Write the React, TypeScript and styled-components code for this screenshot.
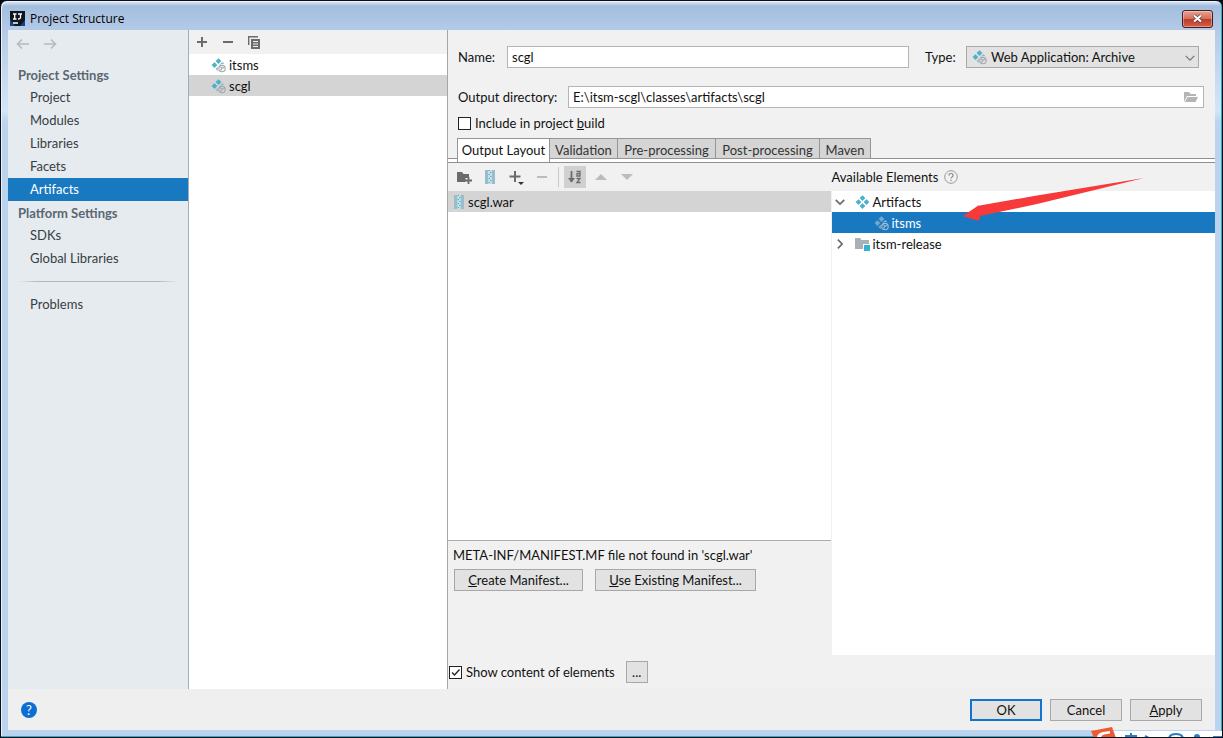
import React from "react";
import styled, { createGlobalStyle, css } from "styled-components";

const FONT = 'Lato, "Noto Sans CJK SC", sans-serif';
const TITLE_FONT = '"Open Sans", "Noto Sans CJK SC", sans-serif';

const GlobalStyle = createGlobalStyle`
  * { box-sizing: border-box; }
  body { margin: 0; background: #05070d; font: 13px/20px ${FONT}; color: #111; }
  button, input, select { font: inherit; color: inherit; margin: 0; }
  button { cursor: default; }
  h1, h2, p, ul { margin: 0; padding: 0; font: inherit; }
  ul { list-style: none; }
  svg { display: block; flex: none; }
`;

const Window = styled.div`
  position: relative;
  display: flex;
  flex-direction: column;
  min-height: 100vh;
  overflow: hidden;
  padding: 0 7px 7px;
  border: 1px solid #0b0f1a;
  border-radius: 7px 7px 0 0;
  background: linear-gradient(to bottom, #e4eefa 0, #a3bedd 5px, #b4cbe8 30px, #d4e5f6 110px, #bad4ef 121px, #bad4ef 100%);
  box-shadow: inset -1px -1px 0 #35a9c4, inset 1px 1px 0 #eaf3fc;
`;

const TitleBar = styled.header`
  display: flex;
  align-items: center;
  height: 29px;
  padding: 6px 2px 0;
  gap: 5px;
`;

const Title = styled.h1`
  flex: 1;
  font-family: ${TITLE_FONT};
  font-size: 12px;
  color: #000;
`;

const CloseButton = styled.button`
  display: flex;
  align-items: center;
  justify-content: center;
  width: 31px;
  height: 18px;
  padding: 0;
  border: 1px solid #4a1a20;
  border-radius: 3px;
  background: linear-gradient(#e3a394 0, #d3705c 48%, #bb3826 50%, #d2604a 100%);
  box-shadow: inset 0 0 0 1px rgba(255, 255, 255, 0.35);
`;

const Client = styled.div`
  flex: 1;
  display: flex;
  flex-direction: column;
  background: #f0efef;
`;

const Body = styled.main`
  flex: 1;
  display: grid;
  grid-template-columns: 181px 259px minmax(0, 1fr);
`;

const Sidebar = styled.nav`
  background: #e6ebef;
  border-right: 1px solid #a2adb8;
`;

const History = styled.div`
  display: flex;
  align-items: center;
  gap: 11px;
  height: 33px;
  padding: 0 7px 6px;
`;

const IconButton = styled.button<{ $on?: boolean }>`
  display: flex;
  align-items: center;
  justify-content: center;
  height: 22px;
  width: ${(p) => (p.$on ? "22px" : "16px")};
  margin: ${(p) => (p.$on ? "0 -3px" : "0")};
  padding: 0;
  border: 0;
  background: ${(p) => (p.$on ? "#d0d0d0" : "none")};
`;

const GroupTitle = styled.h2`
  height: 23px;
  line-height: 25px;
  padding-left: 10px;
  font-weight: 700;
  color: #5a6771;
`;

const NavLink = styled.a<{ $active?: boolean }>`
  display: block;
  height: 23px;
  line-height: 23px;
  padding-left: 22px;
  text-decoration: none;
  color: ${(p) => (p.$active ? "#fff" : "#363d43")};
  background: ${(p) => (p.$active ? "#1979c0" : "none")};
`;

const Divider = styled.hr`
  height: 1px;
  margin: 11px 10px;
  border: 0;
  background: linear-gradient(to right, #e6ebef, #b3babf 12%, #b3babf 88%, #e6ebef);
`;

const ListColumn = styled.section`
  background: #fff;
  border-right: 1px solid #a6a6a6;
`;

const ListToolbar = styled.div`
  display: flex;
  align-items: center;
  gap: 10px;
  height: 24px;
  padding-left: 5px;
  background: #f1f1f1;
`;

const Row = styled.li<{ $tone?: "grey" | "blue"; $indent: number }>`
  display: flex;
  align-items: center;
  gap: 3px;
  height: 21px;
  padding-left: ${(p) => p.$indent}px;
  ${(p) => p.$tone === "grey" && css`background: #d4d4d4;`}
  ${(p) => p.$tone === "blue" && css`background: #1979c0; color: #fff;`}
`;

const Twisty = styled.span`
  width: 17px;
`;

const Details = styled.section`
  display: flex;
  flex-direction: column;
  background: #f1f1f1;
`;

const Form = styled.div`
  display: flex;
  flex-direction: column;
  padding: 16px 11px 5px 10px;
`;

const Field = styled.div`
  display: flex;
  align-items: center;
  height: 22px;
  gap: 11px;
  margin-bottom: 18px;

  & + & { margin-bottom: 5px; }
`;

const FieldLabel = styled.label<{ $width: number }>`
  flex: none;
  width: ${(p) => p.$width}px;
  white-space: nowrap;
`;

const TextInput = styled.input`
  flex: 1;
  min-width: 0;
  height: 22px;
  padding: 0 4px;
  border: 1px solid #b4b4b4;
  background: #fff;
`;

const TypeField = styled.div`
  display: flex;
  align-items: center;
  gap: 11px;
  padding: 0 5px;
`;

const SelectBox = styled.div`
  position: relative;
  width: 233px;

  & > svg { position: absolute; top: 3px; left: 6px; pointer-events: none; }
  & > svg:last-child { top: 7px; left: auto; right: 4px; }
`;

const Select = styled.select`
  display: block;
  width: 100%;
  height: 22px;
  padding: 0 24px;
  appearance: none;
  border: 1px solid #a9a9a9;
  border-radius: 0;
  background: #e2e2e2;
`;

const PathBox = styled.div`
  display: flex;
  align-items: center;
  flex: 1;
  height: 22px;
  padding-right: 4px;
  border: 1px solid #b4b4b4;
  background: #fff;

  & > input { border: 0; height: 20px; }
`;

const CheckLabel = styled.label`
  display: flex;
  align-items: center;
  gap: 4px;
  height: 20px;
`;

const CheckBox = styled.input`
  appearance: none;
  width: 13px;
  height: 13px;
  border: 1px solid #222;
  background: #fff;

  &:checked {
    background: #fff url("data:image/svg+xml,%3Csvg xmlns='http://www.w3.org/2000/svg' viewBox='0 0 11 11'%3E%3Cpath d='M2 5.5l2.5 2.5L9.5 2.5' fill='none' stroke='%23222' stroke-width='1.3'/%3E%3C/svg%3E");
  }
`;

const Tabs = styled.div`
  display: flex;
  height: 25px;
  padding-left: 9px;
  background: linear-gradient(#f1f1f1 20px, #8f8f8f 20px, #8f8f8f 21px, #fff 21px, #fff 24px, #8f8f8f 24px);
`;

const Tab = styled.button<{ $active?: boolean; $width: number }>`
  display: flex;
  justify-content: center;
  width: ${(p) => p.$width}px;
  height: ${(p) => (p.$active ? "24px" : "21px")};
  line-height: 20px;
  padding: 1px 0 0;
  white-space: nowrap;
  border: solid #959595;
  border-width: 1px 1px ${(p) => (p.$active ? "0" : "1px")} 0;
  background: ${(p) => (p.$active ? "#fff" : "#d5d5d5")};
  color: ${(p) => (p.$active ? "#111" : "#333")};

  &:first-child { border-left-width: 1px; }
`;

const Panes = styled.div`
  flex: 1;
  display: grid;
  grid-template-columns: minmax(0, 1fr) minmax(0, 1fr);
`;

const Pane = styled.div`
  display: flex;
  flex-direction: column;
  min-height: 400px;
`;

const PaneToolbar = styled.div`
  display: flex;
  align-items: center;
  gap: 10px;
  height: 28px;
  padding-left: 8px;
`;

const PaneTitle = styled.div`
  display: flex;
  align-items: center;
  gap: 6px;
  height: 28px;
`;

const Separator = styled.span`
  width: 1px;
  height: 20px;
  margin: 0 -2px;
  background: #c8c8c8;
`;

const Tree = styled.ul`
  flex: 1;
  background: #fff;
`;

const LayoutTree = styled(Tree)`
  margin-right: 1px;
  border-bottom: 1px solid #adadad;
`;

const Manifest = styled.div`
  height: 114px;
  padding: 4px 5px;
`;

const ButtonRow = styled.div`
  display: flex;
  gap: 12px;
  padding: 4px 1px;
`;

const Button = styled.button<{ $primary?: boolean; $width: number }>`
  height: 22px;
  width: ${(p) => p.$width}px;
  padding: 0;
  border: ${(p) => (p.$primary ? "2px solid #0e76d0" : "1px solid #a8a8a8")};
  background: #e2e2e2;
  line-height: ${(p) => (p.$primary ? "16px" : "18px")};
`;

const Options = styled.div`
  display: flex;
  align-items: center;
  gap: 11px;
  height: 34px;
  padding-left: 1px;
`;

const Footer = styled.footer`
  display: flex;
  align-items: center;
  gap: 8px;
  height: 41px;
  padding: 0 13px;
`;

const HelpButton = styled.button`
  width: 16px;
  height: 16px;
  padding: 0;
  margin-right: auto;
  border: 0;
  border-radius: 50%;
  background: #0a6fd0;
  color: #fff;
  line-height: 16px;
`;

const Pointer = styled.svg`
  position: absolute;
  top: 176px;
  right: 76px;
  pointer-events: none;
`;

const Tray = styled.svg`
  position: absolute;
  right: -1px;
  bottom: -1px;
`;

const AppLogo = () => (
  <svg width="15" height="15" viewBox="0 0 15 15">
    <rect width="15" height="15" fill="#10161f" />
    <path d="M0 15V8l5 7zM15 15h-5l5-6z" fill="#15457b" />
    <path d="M3 3h3.500M4.700 3v5M3 8h3.500M8 3h4M10.500 3v3.500q0 1.500-2.500 1.500M3 12h5" stroke="#fff" strokeWidth="1.300" fill="none" />
  </svg>
);

const Diamonds = ({ archive = false, pale = false }: { archive?: boolean; pale?: boolean }) => {
  const main = pale ? "#6fa9cf" : "#4fb0cb";
  const soft = pale ? "#8db4d0" : "#93b9c6";
  return (
    <svg width="15" height="16" viewBox="0 0 15 16">
      <path d="M7.500 1.200l2.900 2.900-2.900 2.900-2.900-2.900z" fill={main} />
      <path d="M3.500 5.200l2.900 2.900L3.500 11 .6 8.100z" fill={main} />
      {!archive && <path d="M11.500 5.200l2.900 2.900-2.900 2.900-2.900-2.900zM7.500 9.200l2.900 2.900L7.500 15l-2.900-2.900z" fill={main} />}
      {archive && (
        <>
          <path d="M11.300 5l2.300 2.300q-3.300-.7-5 1l-.4-.4zM7.300 9.200q-1.200 2-.4 4.800L4.500 11.900z" fill={soft} />
          <g fill="none" stroke={pale ? "#a5bccd" : "#a2a9ae"} strokeWidth="1.100">
            <circle cx="11" cy="11.600" r="3.200" />
            <path d="M9 9.600l2 1.500 2.400-.6M9.500 13.600l1.500-2.500" />
          </g>
        </>
      )}
    </svg>
  );
};

const Archive = () => (
  <svg width="12" height="16" viewBox="0 0 12 16">
    <path d="M1 1h3.500v14H1zM7.500 1H11v14H7.500z" fill="#9bbccb" />
    <path d="M4.500 1h3v14h-3z" fill="#c3e3ea" />
    <path d="M4.500 1.500H6M6 3.500h1.500M4.500 5.500H6M6 7.500h1.500M4.500 9.500H6M6 11.500h1.500M4.500 13.500H6" stroke="#5fb0c2" />
  </svg>
);

const Stroke = ({ d, color = "#6b6b6b", size = 14, weight = 2 }: { d: string; color?: string; size?: number; weight?: number }) => (
  <svg width={size} height={size} viewBox="0 0 14 14">
    <path d={d} fill="none" stroke={color} strokeWidth={weight} />
  </svg>
);

export default function App() {
  return (
    <>
      <GlobalStyle />
      <Window>
        <TitleBar>
          <AppLogo />
          <Title>Project Structure</Title>
          <CloseButton aria-label="Close">
            <svg width="11" height="9" viewBox="0 0 11 9">
              <path d="M2 1.500l7 6M9 1.500l-7 6" stroke="#5a3238" strokeWidth="3.600" />
              <path d="M2 1.500l7 6M9 1.500l-7 6" stroke="#fff" strokeWidth="2.200" />
            </svg>
          </CloseButton>
        </TitleBar>
        <Client>
          <Body>
            <Sidebar>
              <History>
                <IconButton aria-label="Back"><Stroke color="#b5bbc0" weight={1.6} d="M13 7H1.500M6 2.500L1.500 7 6 11.500" /></IconButton>
                <IconButton aria-label="Forward"><Stroke color="#b5bbc0" weight={1.6} d="M1 7h11.500M8 2.500L12.500 7 8 11.500" /></IconButton>
              </History>
              <GroupTitle>Project Settings</GroupTitle>
              <NavLink href="#project">Project</NavLink>
              <NavLink href="#modules">Modules</NavLink>
              <NavLink href="#libraries">Libraries</NavLink>
              <NavLink href="#facets">Facets</NavLink>
              <NavLink href="#artifacts" $active>Artifacts</NavLink>
              <GroupTitle>Platform Settings</GroupTitle>
              <NavLink href="#sdks">SDKs</NavLink>
              <NavLink href="#global">Global Libraries</NavLink>
              <Divider />
              <NavLink href="#problems">Problems</NavLink>
            </Sidebar>
            <ListColumn>
              <ListToolbar>
                <IconButton aria-label="Add"><Stroke d="M7 2v10M2 7h10" /></IconButton>
                <IconButton aria-label="Remove"><Stroke d="M2 7h10" /></IconButton>
                <IconButton aria-label="Copy">
                  <svg width="14" height="14" viewBox="0 0 14 14">
                    <path d="M1.700 10V1.700H11" fill="none" stroke="#6b6b6b" strokeWidth="1.400" />
                    <path d="M4 4h9v10H4z" fill="#6b6b6b" />
                    <path d="M6 6.500h5M6 9h5M6 11.500h5" stroke="#f1f1f1" />
                  </svg>
                </IconButton>
              </ListToolbar>
              <ul>
                <Row $indent={22}><Diamonds archive />itsms</Row>
                <Row $indent={22} $tone="grey"><Diamonds archive />scgl</Row>
              </ul>
            </ListColumn>
            <Details>
              <Form>
                <Field>
                  <FieldLabel htmlFor="name" $width={38}>Name:</FieldLabel>
                  <TextInput id="name" defaultValue="scgl" />
                  <TypeField>
                    <FieldLabel htmlFor="type" $width={30}>Type:</FieldLabel>
                    <SelectBox>
                      <Diamonds archive />
                      <Select id="type"><option>Web Application: Archive</option></Select>
                      <Stroke size={10} color="#777" weight={1.8} d="M1 4l6 6 6-6" />
                    </SelectBox>
                  </TypeField>
                </Field>
                <Field>
                  <FieldLabel htmlFor="output" $width={99}>Output directory:</FieldLabel>
                  <PathBox>
                    <TextInput id="output" defaultValue="E:\itsm-scgl\classes\artifacts\scgl" />
                    <IconButton aria-label="Browse">
                      <svg width="16" height="12" viewBox="0 0 16 12">
                        <path d="M1 11V1h5l1.500 2H13v2H4z" fill="#b4b4b4" />
                        <path d="M4.500 6H15l-2.500 5H2z" fill="#b4b4b4" />
                      </svg>
                    </IconButton>
                  </PathBox>
                </Field>
                <CheckLabel><CheckBox type="checkbox" /><span>Include in project <u>b</u>uild</span></CheckLabel>
              </Form>
              <Tabs>
                <Tab $active $width={93}>Output Layout</Tab>
                <Tab $width={68}>Validation</Tab>
                <Tab $width={98}>Pre-processing</Tab>
                <Tab $width={104}>Post-processing</Tab>
                <Tab $width={51}>Maven</Tab>
              </Tabs>
              <Panes>
                <Pane>
                  <PaneToolbar>
                    <IconButton aria-label="New folder">
                      <svg width="15" height="14" viewBox="0 0 15 14">
                        <path d="M0 2h5l1.500 2H12v4H8.500v4H0z" fill="#6b6b6b" />
                        <path d="M11.500 7v7M8 10.500h7" stroke="#6b6b6b" strokeWidth="1.800" />
                      </svg>
                    </IconButton>
                    <IconButton aria-label="New archive"><Archive /></IconButton>
                    <IconButton aria-label="Add copy">
                      <svg width="16" height="16" viewBox="0 0 16 16">
                        <path d="M7 2v11M1.500 7.500h11" stroke="#6b6b6b" strokeWidth="2" />
                        <path d="M10 13h6l-3 3z" fill="#333" />
                      </svg>
                    </IconButton>
                    <IconButton aria-label="Remove"><Stroke color="#bcbcbc" d="M2 7h10" /></IconButton>
                    <Separator />
                    <IconButton $on aria-label="Sort">
                      <svg width="16" height="16" viewBox="0 0 16 16">
                        <path d="M4.500 2v11" stroke="#6b6b6b" strokeWidth="1.800" />
                        <path d="M1 9h7l-3.500 4.500z" fill="#6b6b6b" />
                        <path d="M9.500 2.500H13V7h-3V4.700h3M9.500 9.500h3.500l-3 4h3.500" fill="none" stroke="#6b6b6b" strokeWidth="1.300" />
                      </svg>
                    </IconButton>
                    <IconButton aria-label="Move up"><svg width="12" height="6"><path d="M0 6l6-6 6 6z" fill="#bcbcbc" /></svg></IconButton>
                    <IconButton aria-label="Move down"><svg width="12" height="6"><path d="M0 0h12L6 6z" fill="#bcbcbc" /></svg></IconButton>
                  </PaneToolbar>
                  <LayoutTree>
                    <Row $indent={5} $tone="grey"><Archive />scgl.war</Row>
                  </LayoutTree>
                  <Manifest>
                    <p>META-INF/MANIFEST.MF file not found in 'scgl.war'</p>
                    <ButtonRow>
                      <Button $width={129}><u>C</u>reate Manifest...</Button>
                      <Button $width={161}><u>U</u>se Existing Manifest...</Button>
                    </ButtonRow>
                  </Manifest>
                </Pane>
                <Pane>
                  <PaneTitle>
                    Available Elements
                    <svg width="14" height="14" viewBox="0 0 14 14">
                      <circle cx="7" cy="7" r="6.300" fill="none" stroke="#999" />
                      <path d="M5 5.500q0-2 2-2t2 1.800q0 1-1 1.700-1 .6-1 1.500M7 9.800v1.200" fill="none" stroke="#888" strokeWidth="1.200" />
                    </svg>
                  </PaneTitle>
                  <Tree>
                    <Row $indent={3}>
                      <Twisty><Stroke size={10} d="M1 4l6 6 6-6" weight={2.4} /></Twisty>
                      <Diamonds />
                      Artifacts
                    </Row>
                    <Row $indent={42} $tone="blue"><Diamonds archive pale />itsms</Row>
                    <Row $indent={3}>
                      <Twisty><Stroke size={10} d="M4 1l6 6-6 6" weight={2.4} /></Twisty>
                      <svg width="15" height="14" viewBox="0 0 15 14">
                        <path d="M0 1h5l1.500 2H14v9H0z" fill="#a9b1b6" />
                        <path d="M8 7h7v7H8z" fill="#fff" />
                        <path d="M9 8h6v6H9z" fill="#35b1d4" />
                      </svg>
                      itsm-release
                    </Row>
                  </Tree>
                </Pane>
              </Panes>
              <Options>
                <CheckLabel><CheckBox type="checkbox" defaultChecked />Show content of elements</CheckLabel>
                <Button $width={22}>...</Button>
              </Options>
            </Details>
          </Body>
          <Footer>
            <HelpButton aria-label="Help">?</HelpButton>
            <Button $primary $width={72}>OK</Button>
            <Button $width={72}>Cancel</Button>
            <Button $width={72}><u>A</u>pply</Button>
          </Footer>
        </Client>
        <Pointer width="184" height="44" viewBox="0 0 184 44">
          <path d="M182 1L72 19 15 29 17 28 1 39 17 44 18 39 75 27z" fill="#f8393a" />
        </Pointer>
        <Tray width="132" height="11" viewBox="0 0 132 11">
          <path d="M18 4h114v7H18z" fill="#fff" />
          <path d="M0 4l21-4 4 11H3z" fill="#ee5a34" />
          <path d="M6 11q0-5 6-6l7-1v2.500l-6 1q-3 .7-3 3.500z" fill="#fff" />
          <g fill="none" stroke="#2c7cc4" strokeWidth="2">
            <path d="M34 9h12M40 6v5M54 9l4 2M78 11q1-4 7-4t7 4M122 10h10" />
          </g>
          <circle cx="106" cy="10" r="3" fill="#2c7cc4" />
        </Tray>
      </Window>
    </>
  );
}
